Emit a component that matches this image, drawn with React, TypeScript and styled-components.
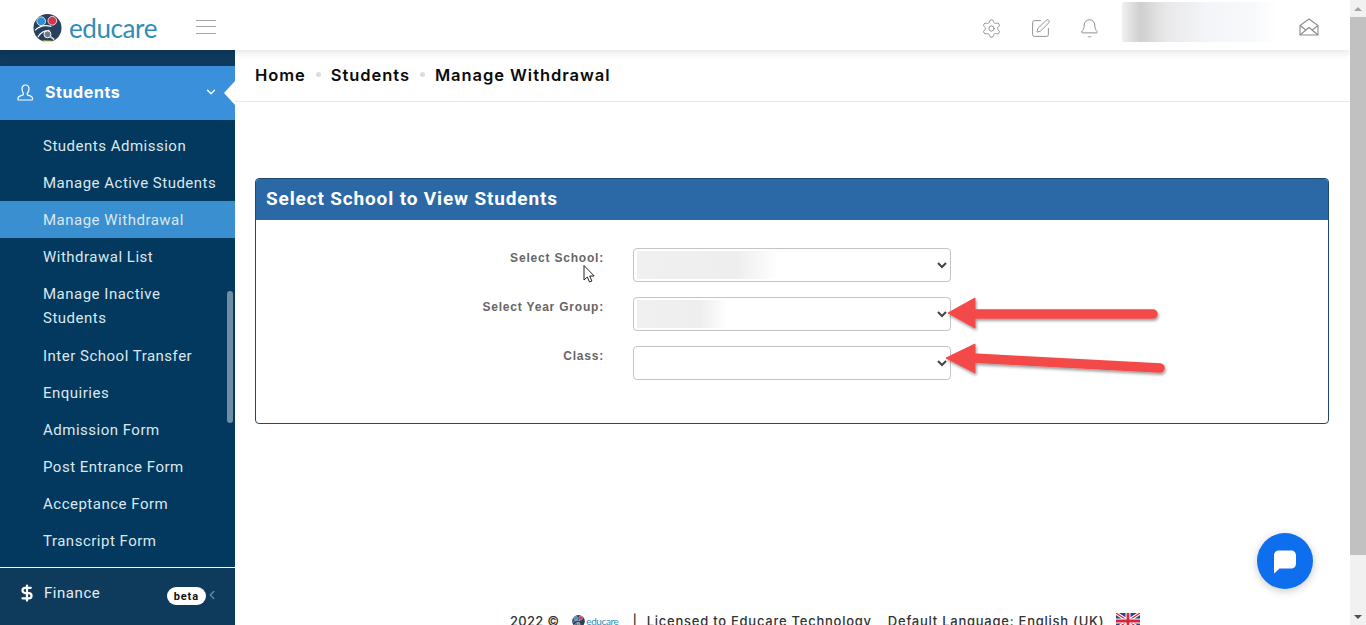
import React from "react";
import styled, { createGlobalStyle } from "styled-components";
import { Bell, ChevronDown, ChevronLeft, DollarSign, Settings, SquarePen } from "lucide-react";

const GlobalStyle = createGlobalStyle`
  html, body {
    margin: 0;
    height: 625px;
    overflow: hidden;
    background: #fff;
  }
  * {
    box-sizing: border-box;
  }
`;

const Page = styled.div`
  position: relative;
  display: flex;
  width: 1366px;
  height: 625px;
  overflow: hidden;
  font-family: "Roboto", "Liberation Sans", sans-serif;
`;

const Frame = styled.div`
  flex: 1;
  min-width: 0;
  display: flex;
  flex-direction: column;
`;

const TopBar = styled.header`
  position: relative;
  z-index: 2;
  height: 50px;
  flex-shrink: 0;
  display: flex;
  align-items: center;
  background: #fff;
  box-shadow: 0 2px 8px rgba(0, 0, 0, 0.12);
`;

const Brand = styled.div`
  width: 196px;
  padding: 6px 0 0 33px;
  display: flex;
  align-items: center;
  gap: 7px;
`;

const BrandName = styled.span`
  font-family: "Lato", sans-serif;
  font-size: 26px;
  line-height: 30px;
  letter-spacing: -0.4px;
  color: #2f8db8;
`;

const Burger = styled.div`
  width: 20px;
  height: 14px;
  margin-top: 3px;
  border-top: 1px solid #a5a5a5;
  border-bottom: 1px solid #a5a5a5;
  position: relative;

  &::after {
    content: "";
    position: absolute;
    left: 0;
    right: 0;
    top: 5px;
    height: 1px;
    background: #a5a5a5;
  }
`;

const TopTools = styled.div`
  margin-left: auto;
  padding-top: 6px;
  display: flex;
  align-items: center;
  color: #8c8c8c;
`;

const ToolSlot = styled.div`
  width: 49px;
  display: flex;
  justify-content: center;
`;

const ProfileBlur = styled.div`
  width: 155px;
  height: 40px;
  margin: 0 1px 12px 8px;
  background: linear-gradient(90deg, #f0f0f0 0%, #cfcfcf 12%, #e8e8ea 28%, #f4f5f8 55%, #f8f9fb 85%, #fff 100%);
`;

const MailSlot = styled.div`
  width: 72px;
  padding: 0 0 3px 21px;
  display: flex;
`;

const Body = styled.div`
  flex: 1;
  min-height: 0;
  display: flex;
`;

const Sidebar = styled.aside`
  position: relative;
  width: 235px;
  flex-shrink: 0;
  padding-top: 16px;
  background: #0e3a5c;
  overflow: hidden;
`;

const ActiveGroup = styled.div`
  position: relative;
  height: 54px;
  padding: 0 17px 2px 17px;
  display: flex;
  align-items: center;
  gap: 11px;
  background: #3a90da;
  color: #fff;
  font-family: "Inter", sans-serif;
  font-size: 16px;
  font-weight: 700;
  letter-spacing: 0.6px;

  &::after {
    content: "";
    position: absolute;
    right: 0;
    top: 15px;
    border-style: solid;
    border-width: 12px 11px 12px 0;
    border-color: transparent #fff transparent transparent;
  }
`;

const GroupChevron = styled.span`
  margin-left: auto;
  display: flex;
`;

const SubMenu = styled.nav`
  height: 448px;
  padding-top: 7px;
  background: #03395e;
  border-bottom: 1px solid #fff;
`;

const SubItem = styled.div<{ $active?: boolean; $wrapped?: boolean }>`
  padding: 6.5px 10px ${(p) => (p.$wrapped ? "7.5px" : "6.5px")} 43px;
  font-size: 15px;
  line-height: 24px;
  letter-spacing: 0.5px;
  color: #dbe7ef;
  background: ${(p) => (p.$active ? "#3a8fd0" : "transparent")};
`;

const FinanceRow = styled.div`
  height: 50px;
  padding: 0 17px 0 20px;
  display: flex;
  align-items: center;
  color: #e4edf3;
  font-size: 15px;
  letter-spacing: 0.55px;
`;

const FinanceIcon = styled.span`
  width: 24px;
  display: flex;
  margin-left: -2px;
  margin-right: 2px;
  color: #fff;
`;

const BetaBadge = styled.span`
  margin-left: auto;
  margin-top: 6px;
  margin-right: -1px;
  height: 18px;
  padding: 0 7px;
  border-radius: 9px;
  display: flex;
  align-items: center;
  background: #fff;
  color: #111;
  font-size: 11px;
  font-weight: 700;
  letter-spacing: 0.9px;
`;

const BackChevron = styled.span`
  display: flex;
  margin-top: 4px;
  margin-right: -1px;
  color: #6f8ba1;
`;

const SideThumb = styled.div`
  position: absolute;
  right: 2px;
  top: 241px;
  width: 6px;
  height: 132px;
  border-radius: 3px;
  background: #6f8ea5;
`;

const Main = styled.main`
  flex: 1;
  min-width: 0;
  display: flex;
  flex-direction: column;
`;

const Crumbs = styled.div`
  height: 52px;
  flex-shrink: 0;
  padding: 0 20px 2px;
  display: flex;
  align-items: center;
  gap: 10px;
  border-bottom: 1px solid #e8e8e8;
  font-family: "Inter", sans-serif;
  font-size: 16.5px;
  font-weight: 600;
  letter-spacing: 0.95px;
  color: #0b0b0b;
`;

const CrumbDot = styled.span`
  width: 5px;
  height: 5px;
  border-radius: 50%;
  background: #dcdcdc;
`;

const Content = styled.div`
  padding: 76px 21px 0 20px;
`;

const Card = styled.section`
  height: 246px;
  border: 1px solid #1d4a6d;
  border-radius: 4px;
  overflow: hidden;
`;

const CardHead = styled.h2`
  margin: 0;
  height: 41px;
  padding: 0 10px 2px;
  display: flex;
  align-items: center;
  background: #2a69a6;
  color: #fff;
  font-size: 19px;
  font-weight: 700;
  letter-spacing: 0.85px;
`;

const Form = styled.div`
  padding-top: 28px;
  display: grid;
  grid-template-columns: 348px 318px;
  column-gap: 29px;
  row-gap: 15px;
`;

const FieldLabel = styled.label`
  padding-top: 3px;
  text-align: right;
  font-family: "Liberation Sans", Arial, sans-serif;
  font-size: 12px;
  font-weight: 700;
  line-height: 14px;
  letter-spacing: 0.8px;
  color: #666;
`;

const SelectWrap = styled.div`
  position: relative;
  height: 34px;
`;

const NativeSelect = styled.select`
  width: 100%;
  height: 100%;
  border: 1px solid #c4c4c4;
  border-radius: 4px;
  background: #fff;
  color: #444;
  font-size: 14px;
`;

const BlurredValue = styled.span<{ $width: number }>`
  position: absolute;
  left: 4px;
  top: 3px;
  bottom: 3px;
  width: ${(p) => p.$width}px;
  background: linear-gradient(90deg, #f0f0f0 0%, #eeeeee 70%, #ffffff 100%);
  pointer-events: none;
`;

const Footer = styled.footer`
  margin-top: 189px;
  height: 30px;
  padding-left: 275px;
  display: flex;
  align-items: flex-start;
  font-family: "Inter", "Liberation Sans", sans-serif;
  font-size: 13px;
  font-weight: 500;
  letter-spacing: 0.75px;
  line-height: 16px;
  color: #333;
  white-space: nowrap;
`;

const FooterYear = styled.span`
  letter-spacing: 0.25px;
`;

const FooterLogo = styled.span`
  display: flex;
  align-items: center;
  gap: 1px;
  margin: 0 14px 0 13px;
  font-family: "Lato", sans-serif;
  font-size: 10px;
  letter-spacing: -0.4px;
  font-weight: 400;
  color: #2f8db8;
`;

const FooterPipe = styled.span`
  margin-right: 9px;
`;

const FooterGap = styled.span`
  width: 16px;
`;

const FlagSlot = styled.span`
  margin-left: 12px;
  display: flex;
`;

const ScrollTrack = styled.div`
  position: relative;
  z-index: 3;
  width: 16px;
  flex-shrink: 0;
  display: flex;
  flex-direction: column;
  background: #f1f1f1;
`;

const ScrollButton = styled.div<{ $down?: boolean }>`
  height: 17px;
  flex-shrink: 0;
  display: flex;
  align-items: center;
  justify-content: center;

  &::before {
    content: "";
    border-left: 4px solid transparent;
    border-right: 4px solid transparent;
    ${(p) => (p.$down ? "border-top: 4px solid #505050;" : "border-bottom: 4px solid #a3a3a3;")}
  }
`;

const ScrollThumb = styled.div`
  height: 538px;
  background: #c1c1c1;
`;

const ScrollRest = styled.div`
  flex: 1;
`;

const ChatBubble = styled.button`
  position: absolute;
  z-index: 4;
  left: 1257px;
  top: 533px;
  width: 56px;
  height: 56px;
  border: 0;
  border-radius: 50%;
  padding: 0;
  display: flex;
  align-items: center;
  justify-content: center;
  background: #0d6fee;
  box-shadow: 0 2px 8px rgba(0, 0, 0, 0.22);
`;

const Annotations = styled.svg`
  position: absolute;
  z-index: 5;
  left: 0;
  top: 0;
  pointer-events: none;
`;

const menuItems = [
  "Students Admission",
  "Manage Active Students",
  "Manage Withdrawal",
  "Withdrawal List",
  "Manage Inactive Students",
  "Inter School Transfer",
  "Enquiries",
  "Admission Form",
  "Post Entrance Form",
  "Acceptance Form",
  "Transcript Form",
];

const fields = [
  { label: "Select School:", blur: 142 },
  { label: "Select Year Group:", blur: 90 },
  { label: "Class:", blur: 0 },
];

function LogoMark({ size }: { size: number }) {
  return (
    <svg width={size} height={size} viewBox="0 0 30 30">
      <circle cx="15" cy="14.5" r="14.5" fill="#28405c" />
      <circle cx="8.5" cy="7.5" r="4.5" fill="#2f8fd0" stroke="#fff" strokeWidth="0.8" />
      <circle cx="20" cy="7" r="4.5" fill="#d8344f" stroke="#fff" strokeWidth="0.8" />
      <path d="M2 17c5-5 11-6 17-4M5 24c3-5 7-7 12-7" fill="none" stroke="#fff" strokeWidth="1.2" />
      <circle cx="15" cy="21" r="3.6" fill="#6b7d90" stroke="#fff" strokeWidth="1" />
      <path d="M18 23.500l4 3" stroke="#ddd" strokeWidth="1.6" />
      <path d="M9.500 27.500c3 2.600 8 2.600 11 .3z" fill="#eef04a" />
    </svg>
  );
}

function UserLine() {
  return (
    <svg width="17" height="17" viewBox="0 0 17 17" fill="none" stroke="#fff" strokeWidth="1.2" strokeLinejoin="round">
      <path d="M5 5c0-2.400 1.400-4 3.500-4S12 2.600 12 5c0 1.800-.7 3.300-1.800 4.200v1.600c1.800.5 4.800 1.300 5.300 3.200.2.800 0 2-.5 2H1.500c-.5 0-.7-1.200-.5-2 .5-1.900 3.500-2.700 5.300-3.200V9.200C5.700 8.300 5 6.800 5 5z" />
    </svg>
  );
}

function OpenEnvelope() {
  return (
    <svg width="20" height="18" viewBox="0 0 20 18" fill="none" stroke="#8c8c8c" strokeWidth="1.1" strokeLinejoin="round">
      <path d="M1 7.500L10 1l9 6.500V17H1z" />
      <path d="M1 7.500l5.500 4.300M19 7.500l-5.500 4.300M1 17l9-7.500L19 17" />
    </svg>
  );
}

function UkFlag() {
  return (
    <svg width="24" height="16" viewBox="0 0 24 16">
      <rect width="24" height="16" fill="#2b3f8c" />
      <path d="M0 0l24 16M24 0L0 16" stroke="#fff" strokeWidth="3.400" />
      <path d="M0 0l24 16M24 0L0 16" stroke="#d3283c" strokeWidth="1.200" />
      <path d="M12 0v16M0 8h24" stroke="#fff" strokeWidth="5" />
      <path d="M12 0v16M0 8h24" stroke="#d3283c" strokeWidth="2.800" />
    </svg>
  );
}

function App() {
  return (
    <>
      <GlobalStyle />
      <Page>
        <Frame>
          <TopBar>
            <Brand>
              <LogoMark size={29} />
              <BrandName>educare</BrandName>
            </Brand>
            <Burger />
            <TopTools>
              <ToolSlot>
                <Settings size={21} strokeWidth={1.1} />
              </ToolSlot>
              <ToolSlot>
                <SquarePen size={21} strokeWidth={1.1} />
              </ToolSlot>
              <ToolSlot>
                <Bell size={21} strokeWidth={1.1} />
              </ToolSlot>
              <ProfileBlur />
              <MailSlot>
                <OpenEnvelope />
              </MailSlot>
            </TopTools>
          </TopBar>
          <Body>
            <Sidebar>
              <ActiveGroup>
                <UserLine />
                Students
                <GroupChevron>
                  <ChevronDown size={14} strokeWidth={2.4} />
                </GroupChevron>
              </ActiveGroup>
              <SubMenu>
                {menuItems.map((item) => (
                  <SubItem
                    key={item}
                    $active={item === "Manage Withdrawal"}
                    $wrapped={item === "Manage Inactive Students"}
                  >
                    {item}
                  </SubItem>
                ))}
              </SubMenu>
              <FinanceRow>
                <FinanceIcon>
                  <DollarSign size={18} strokeWidth={3} />
                </FinanceIcon>
                Finance
                <BetaBadge>beta</BetaBadge>
                <BackChevron>
                  <ChevronLeft size={14} strokeWidth={2.2} />
                </BackChevron>
              </FinanceRow>
              <SideThumb />
            </Sidebar>
            <Main>
              <Crumbs>
                Home
                <CrumbDot />
                Students
                <CrumbDot />
                Manage Withdrawal
              </Crumbs>
              <Content>
                <Card>
                  <CardHead>Select School to View Students</CardHead>
                  <Form>
                    {fields.map((field) => (
                      <React.Fragment key={field.label}>
                        <FieldLabel>{field.label}</FieldLabel>
                        <SelectWrap>
                          <NativeSelect aria-label={field.label} />
                          {field.blur > 0 && <BlurredValue $width={field.blur} />}
                        </SelectWrap>
                      </React.Fragment>
                    ))}
                  </Form>
                </Card>
              </Content>
              <Footer>
                <FooterYear>2022 ©</FooterYear>
                <FooterLogo>
                  <LogoMark size={13} />
                  educare
                </FooterLogo>
                <FooterPipe>|</FooterPipe>
                Licensed to Educare Technology
                <FooterGap />
                Default Language: English (UK)
                <FlagSlot>
                  <UkFlag />
                </FlagSlot>
              </Footer>
            </Main>
          </Body>
        </Frame>
        <ScrollTrack>
          <ScrollButton />
          <ScrollThumb />
          <ScrollRest />
          <ScrollButton $down />
        </ScrollTrack>
        <ChatBubble aria-label="Chat">
          <svg width="28" height="28" viewBox="0 0 28 28">
            <path
              d="M8 3.500h12c3 0 5 2 5 5v8c0 3-2 5-5 5H8.500L3.800 26c-.4.300-.8.100-.8-.4V8.500c0-3 2-5 5-5z"
              fill="#fff"
            />
          </svg>
        </ChatBubble>
        <Annotations width="1366" height="625" viewBox="0 0 1366 625">
          <defs>
            <filter id="arrowShadow" x="-10%" y="-40%" width="120%" height="190%">
              <feDropShadow dx="1" dy="2" stdDeviation="1.500" floodColor="#000" floodOpacity="0.4" />
            </filter>
          </defs>
          <g fill="#f44848" stroke="#f44848" filter="url(#arrowShadow)">
            <path d="M948 313L975 298V328Z" strokeWidth="1" />
            <path d="M972 314L1153 314" strokeWidth="9.500" strokeLinecap="round" />
            <path d="M946 358L975 344V373Z" strokeWidth="1" />
            <path d="M972 358L1160 368" strokeWidth="9.500" strokeLinecap="round" />
          </g>
          <path
            d="M584 265.500V280l3.300-3 2.200 5 2.400-1-2.200-5h4.500z"
            fill="#fff"
            stroke="#222"
            strokeWidth="1"
            strokeLinejoin="round"
          />
        </Annotations>
      </Page>
    </>
  );
}

export default App;
